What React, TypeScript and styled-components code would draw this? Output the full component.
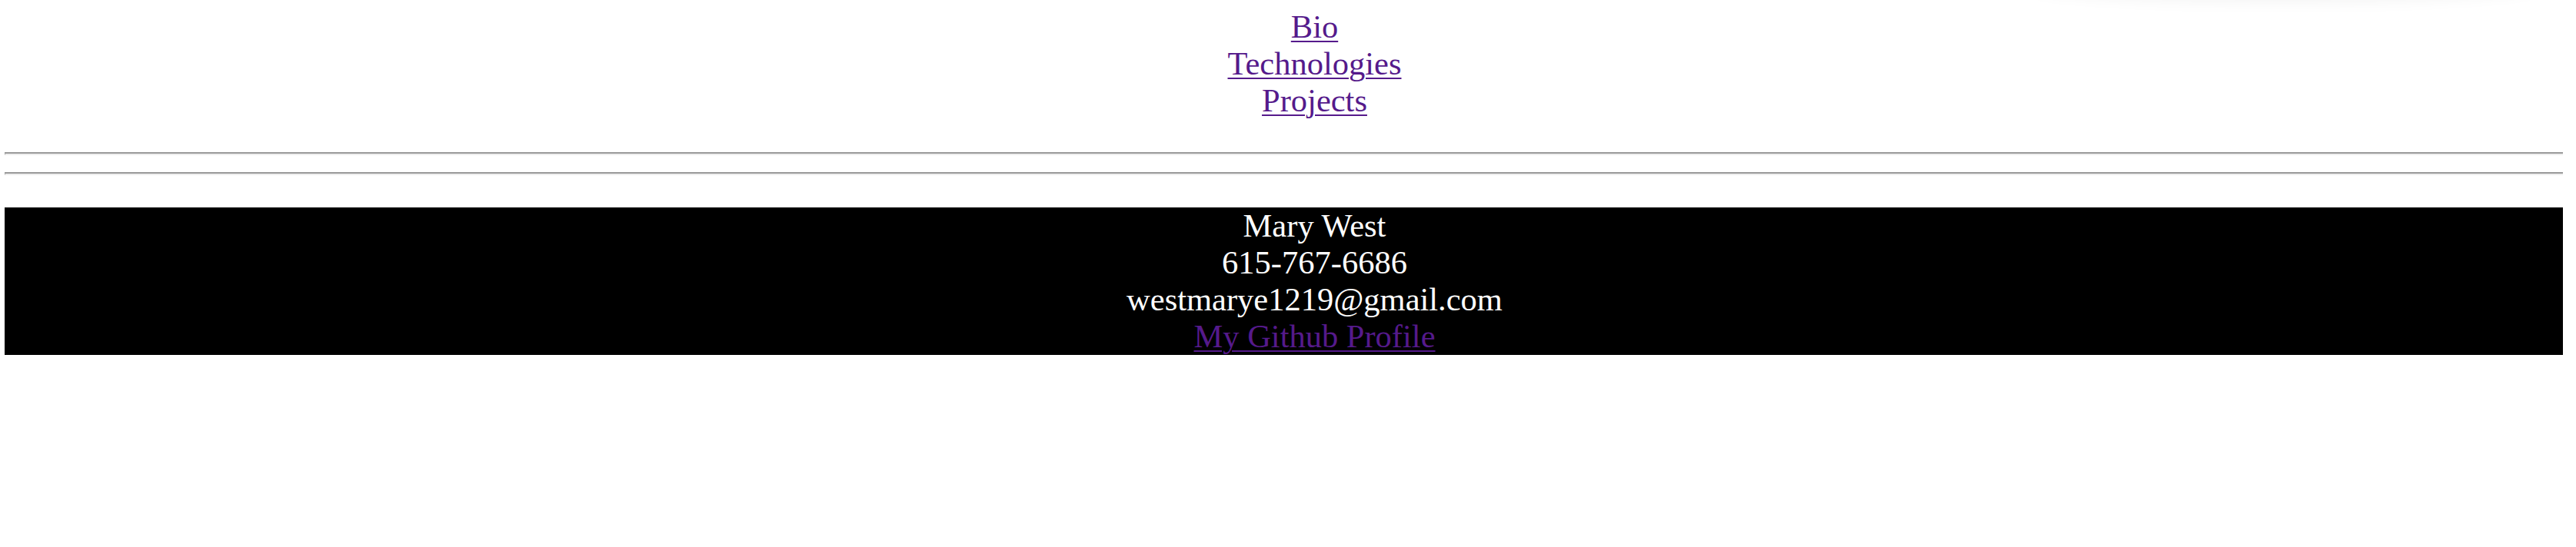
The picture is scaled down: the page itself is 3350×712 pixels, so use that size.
import React from "react";
import styled, { createGlobalStyle } from "styled-components";

const GlobalStyle = createGlobalStyle`
  html, body {
    margin: 0;
    padding: 0;
    background: #ffffff;
  }
  body {
    font-family: "Liberation Serif", "Times New Roman", serif;
  }
`;

const Page = styled.div`
  position: relative;
  padding: 11px 17px 0 6px;
  font-family: "Liberation Serif", "Times New Roman", serif;
  font-size: 42.5px;
  line-height: 48px;
`;

const TopShadow = styled.div`
  position: absolute;
  top: -40px;
  left: 2640px;
  width: 660px;
  height: 40px;
  border-radius: 50%;
  box-shadow: 0 0 22px rgba(0, 0, 0, 0.06);
  pointer-events: none;
`;

const Nav = styled.nav`
  display: flex;
  flex-direction: column;
  align-items: center;
  padding-left: 80px;
`;

const Link = styled.a`
  color: #551a8b;
  text-decoration: underline;
  text-decoration-thickness: 2px;
  text-underline-offset: 4px;
`;

const Rule = styled.hr<{ $gapTop: number }>`
  margin: ${(p) => p.$gapTop}px 0 0 0;
  height: 0;
  border: none;
  border-top: 2px solid #9a9a9a;
  border-bottom: 2px solid #eeeeee;
  border-left: 1px solid #9a9a9a;
`;

const Footer = styled.footer`
  margin-top: 42px;
  padding-left: 80px;
  background: #000000;
  color: #ffffff;
  display: flex;
  flex-direction: column;
  align-items: center;
`;

const Line = styled.div`
  color: #ffffff;
`;

export default function App() {
  return (
    <>
      <GlobalStyle />
      <Page>
        <TopShadow />
        <Nav>
          <Link href="#bio">Bio</Link>
          <Link href="#technologies">Technologies</Link>
          <Link href="#projects">Projects</Link>
        </Nav>
        <Rule $gapTop={43} />
        <Rule $gapTop={22} />
        <Footer>
          <Line>Mary West</Line>
          <Line>615-767-6686</Line>
          <Line>westmarye1219@gmail.com</Line>
          <Link href="#github">My Github Profile</Link>
        </Footer>
      </Page>
    </>
  );
}
